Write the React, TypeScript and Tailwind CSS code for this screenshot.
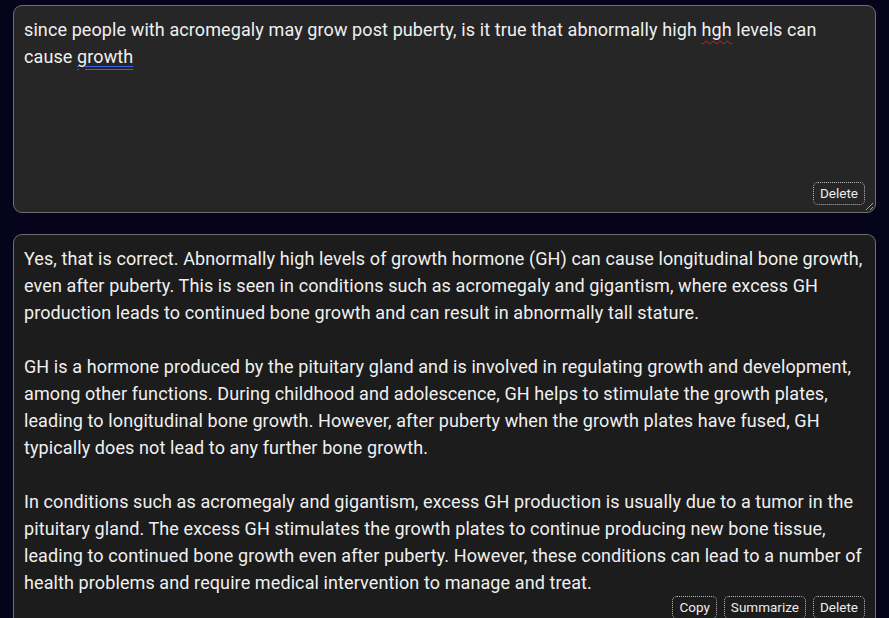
import React from "react";

const question = [
  [
    { t: "since people with acromegaly may grow post puberty, is it true that abnormally high " },
    { t: "hgh", k: "spell" },
    { t: " levels can" },
  ],
  [{ t: "cause " }, { t: "growth", k: "grammar" }],
];

const answer = [
  [
    "Yes, that is correct. Abnormally high levels of growth hormone (GH) can cause longitudinal bone growth,",
    "even after puberty. This is seen in conditions such as acromegaly and gigantism, where excess GH",
    "production leads to continued bone growth and can result in abnormally tall stature.",
  ],
  [
    "GH is a hormone produced by the pituitary gland and is involved in regulating growth and development,",
    "among other functions. During childhood and adolescence, GH helps to stimulate the growth plates,",
    "leading to longitudinal bone growth. However, after puberty when the growth plates have fused, GH",
    "typically does not lead to any further bone growth.",
  ],
  [
    "In conditions such as acromegaly and gigantism, excess GH production is usually due to a tumor in the",
    "pituitary gland. The excess GH stimulates the growth plates to continue producing new bone tissue,",
    "leading to continued bone growth even after puberty. However, these conditions can lead to a number of",
    "health problems and require medical intervention to manage and treat.",
  ],
];

function Btn({ children }: { children: React.ReactNode }) {
  return (
    <button className="h-[23px] px-[6px] rounded-[5px] border border-dotted border-[#b8b8b8] text-[13.5px] leading-none text-[#ededed] bg-transparent">
      {children}
    </button>
  );
}

export default function App() {
  return (
    <div
      className="min-h-[618px] w-full bg-[#05041a] pl-[13px] pr-[13px] pt-[5px] overflow-hidden"
      style={{ fontFamily: "Roboto, 'Noto Sans', sans-serif" }}
    >
      {/* prompt editor */}
      <div className="relative h-[208px] rounded-[9px] border border-[#6e6e73] bg-[#262626] flex flex-col">
        <div className="flex-1 pl-[10px] pt-[10px] text-[18px] leading-[27px] tracking-[0.1px] text-[#f0f0f0]">
          {question.map((line, i) => (
            <div key={i} className="whitespace-nowrap">
              {line.map((s, j) =>
                s.k === "spell" ? (
                  <span key={j} className="underline decoration-wavy decoration-[#e01b1b] decoration-1 underline-offset-[4px]">
                    {s.t}
                  </span>
                ) : s.k === "grammar" ? (
                  <span key={j} className="underline decoration-double decoration-[#3d5ee8] underline-offset-[3px]">
                    {s.t}
                  </span>
                ) : (
                  <span key={j}>{s.t}</span>
                )
              )}
            </div>
          ))}
        </div>
        <div className="flex justify-end pr-[10px] pb-[7px]">
          <Btn>Delete</Btn>
        </div>
        <svg className="absolute right-[1px] bottom-[1px]" width="9" height="9" viewBox="0 0 9 9">
          <path d="M8 1 L1 8 M8 5 L5 8" stroke="#a0a0a0" strokeWidth="1" />
        </svg>
      </div>

      {/* response */}
      <div className="mt-[21px] rounded-t-[9px] border border-b-0 border-[#6e6e73] bg-[#1c1c1c] pt-[10px] pl-[10px] pr-[10px] pb-[20px]">
        <div className="text-[18px] leading-[27px] tracking-[0.1px] text-[#f0f0f0] flex flex-col gap-[27px]">
          {answer.map((p, i) => (
            <div key={i}>
              {p.map((l, j) => (
                <div key={j} className="whitespace-nowrap">
                  {l}
                </div>
              ))}
            </div>
          ))}
        </div>
        <div className="flex justify-end gap-[7px]">
          <Btn>Copy</Btn>
          <Btn>Summarize</Btn>
          <Btn>Delete</Btn>
        </div>
      </div>
    </div>
  );
}
